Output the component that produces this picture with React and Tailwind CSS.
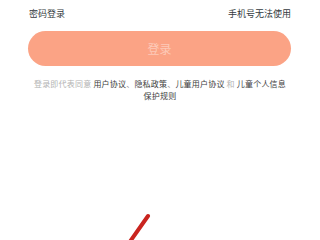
import React from "react";

const App = () => {
    return (
        <div
            className="relative w-[320px] h-[240px] overflow-hidden bg-white"
            style={{ fontFamily: '"Noto Sans CJK SC", "Noto Sans", sans-serif' }}
        >
            <div className="flex justify-between px-[29px] pt-[7px] text-[9px] leading-[14px] text-[#333a40]">
                <span>密码登录</span>
                <span>手机号无法使用</span>
            </div>

            <button className="mx-[28px] mt-[10px] flex h-[35px] w-[263px] items-center justify-center rounded-full bg-[#fba385] text-[12px] text-[#fdcab8]">
                登录
            </button>

            {/* agreement text */}
            <p className="mt-[12px] whitespace-nowrap text-center text-[8px] leading-[12px] tracking-[0.2px] text-[#b3b3b3]">
                登录即代表同意 <span className="text-[#3d3d3d]">用户协议</span>
                <span className="text-[#999]">、</span>
                <span className="text-[#3d3d3d]">隐私政策</span>
                <span className="text-[#999]">、</span>
                <span className="text-[#3d3d3d]">儿童用户协议</span> 和{" "}
                <span className="text-[#3d3d3d]">儿童个人信息</span>
                <br />
                <span className="text-[#3d3d3d]">保护规则</span>
            </p>

            {/* red stroke */}
            <svg className="absolute left-[120px] top-[205px]" width="40" height="40" viewBox="0 0 40 40">
                <line x1="28" y1="11" x2="9" y2="38" stroke="#c9241f" strokeWidth="4" strokeLinecap="round" />
            </svg>
        </div>
    );
};

export default App;
